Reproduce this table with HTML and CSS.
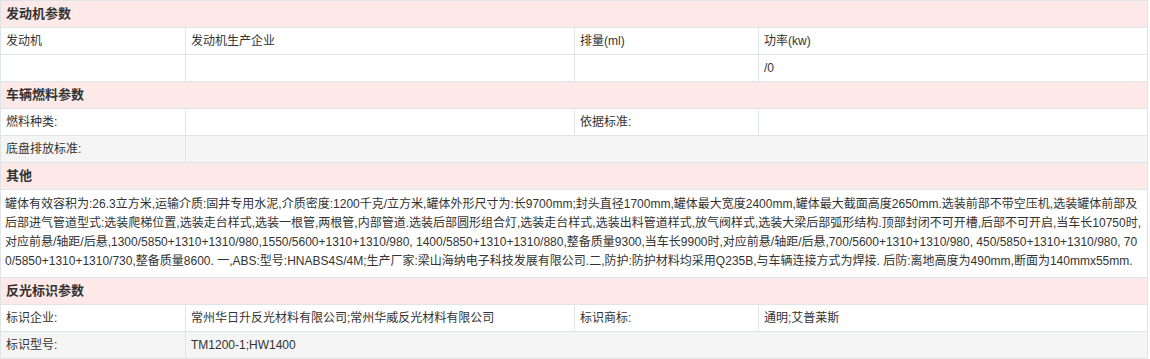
FILE: index.html
```html
<!DOCTYPE html>
<html lang="zh-CN">
<head>
<meta charset="utf-8">
<title>参数</title>
<link rel="stylesheet" href="styles.css">
</head>
<body>
<table class="params">
  <colgroup>
    <col class="c1"><col class="c2"><col class="c3"><col class="c4">
  </colgroup>
  <tbody>
    <tr class="sec"><th colspan="4">发动机参数</th></tr>
    <tr><td>发动机</td><td>发动机生产企业</td><td>排量(ml)</td><td>功率(kw)</td></tr>
    <tr><td></td><td></td><td></td><td>/0</td></tr>
    <tr class="sec"><th colspan="4">车辆燃料参数</th></tr>
    <tr><td>燃料种类:</td><td></td><td>依据标准:</td><td></td></tr>
    <tr class="alt"><td>底盘排放标准:</td><td colspan="3"></td></tr>
    <tr class="sec"><th colspan="4">其他</th></tr>
    <tr><td colspan="4" class="long">罐体有效容积为:26.3立方米,运输介质:固井专用水泥,介质密度:1200千克/立方米,罐体外形尺寸为:长9700mm;封头直径1700mm,罐体最大宽度2400mm,罐体最大截面高度2650mm.选装前部不带空压机,选装罐体前部及后部进气管道型式:选装爬梯位置,选装走台样式,选装一根管,两根管,内部管道.选装后部圆形组合灯,选装走台样式,选装出料管道样式,放气阀样式,选装大梁后部弧形结构.顶部封闭不可开槽,后部不可开启,当车长10750时,对应前悬/轴距/后悬,1300/5850+1310+1310/980,1550/5600+1310+1310/980, 1400/5850+1310+1310/880,整备质量9300,当车长9900时,对应前悬/轴距/后悬,700/5600+1310+1310/980, 450/5850+1310+1310/980, 700/5850+1310+1310/730,整备质量8600. 一,ABS:型号:HNABS4S/4M;生产厂家:梁山海纳电子科技发展有限公司.二,防护:防护材料均采用Q235B,与车辆连接方式为焊接. 后防:离地高度为490mm,断面为140mmx55mm.</td></tr>
    <tr class="sec"><th colspan="4">反光标识参数</th></tr>
    <tr><td>标识企业:</td><td>常州华日升反光材料有限公司;常州华威反光材料有限公司</td><td>标识商标:</td><td>通明;艾普莱斯</td></tr>
    <tr class="alt"><td>标识型号:</td><td colspan="3">TM1200-1;HW1400</td></tr>
  </tbody>
</table>
</body>
</html>
```

FILE: styles.css
```css
html, body {
  margin: 0;
  padding: 0;
  background: #ffffff;
}

body {
  font-family: "Liberation Sans", Arial, "Noto Sans CJK SC", sans-serif;
  font-size: 12px;
  color: #333333;
}

.params {
  width: 1147px;
  table-layout: fixed;
  border-collapse: collapse;
  border: 1px solid #dfe4e8;
}

.params .c1 { width: 185px; }
.params .c2 { width: 389px; }
.params .c3 { width: 184px; }
.params .c4 { width: 389px; }

.params th,
.params td {
  border: 1px solid #dfe4e8;
  height: 27px;
  padding: 0 5px;
  box-sizing: border-box;
  text-align: left;
  vertical-align: middle;
  line-height: 18px;
  font-weight: normal;
}

.params .sec th {
  background: #fdeae8;
  font-weight: bold;
  font-size: 13px;
  color: #333333;
}

.params .alt td {
  background: #f5f5f5;
}

.params td.long {
  padding: 5px 3px 6px 4px;
  line-height: 19px;
  word-break: break-all;
}
```
